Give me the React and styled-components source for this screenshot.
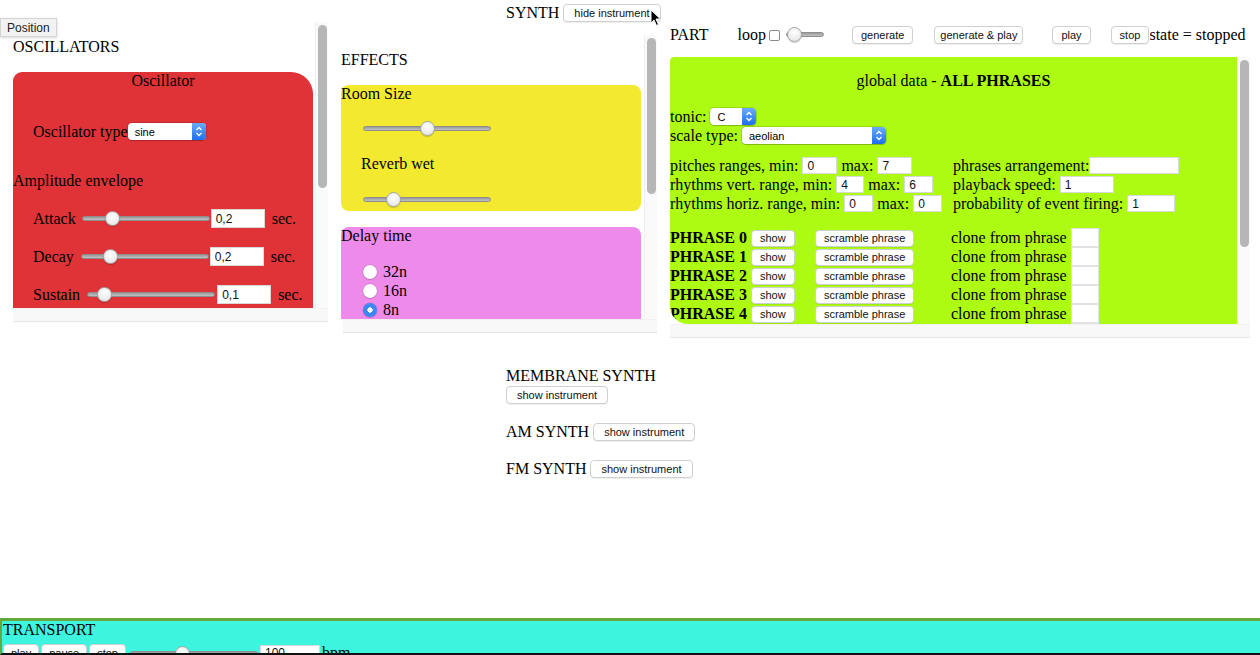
import React from 'react'
import styled, { createGlobalStyle } from 'styled-components'

const GlobalStyle = createGlobalStyle`
  * { box-sizing: border-box; }
  html, body { margin: 0; padding: 0; background: #fff; overflow: hidden; }
  body {
    font-family: "Liberation Serif", "Times New Roman", serif;
    font-size: 16px;
    color: #000;
  }
`

const Page = styled.div`
  position: relative;
  height: 655px;
  padding-top: 3px;
`

const Tooltip = styled.div`
  position: absolute;
  left: 0;
  top: 18px;
  height: 19px;
  padding: 0 6px;
  display: flex;
  align-items: center;
  background: #f2f2f2;
  border: 1px solid #d4d4d4;
  box-shadow: 0 1px 3px rgba(0,0,0,0.15);
  font: 12px "Liberation Sans", Arial, sans-serif;
  color: #222;
  z-index: 5;
`

const Cursor = styled.svg`
  position: absolute;
  left: 650px;
  top: 9px;
  z-index: 5;
`

const InstrumentColumn = styled.div`
  width: 248px;
  margin: 0 auto;
`

const InstrumentHeader = styled.div`
  display: flex;
  flex-wrap: wrap;
  align-items: center;
  gap: 1px 4px;
  margin-top: ${p => p.$mt || 0}px;
  line-height: 19px;
`

const MacButton = styled.button`
  height: ${p => p.$h || 18}px;
  padding: 0 ${p => p.$px ?? 8}px;
  margin: 0;
  margin-left: ${p => p.$ml || 0}px;
  background: #fff;
  border: 1px solid #cfcfcf;
  border-radius: 4px;
  box-shadow: 0 1px 0 rgba(0,0,0,0.06);
  font: 11px "Liberation Sans", Arial, sans-serif;
  color: #111;
  white-space: nowrap;
  cursor: pointer;
`

const PanelsRow = styled.div`
  display: flex;
  align-items: flex-start;
  height: 316px;
`

/* scroll pane with drawn scrollbars (the headless browser hides native ones) */
const ScrollFrame = styled.div`
  flex: none;
  display: flex;
  flex-direction: column;
  width: ${p => p.$w}px;
  height: ${p => p.$h}px;
  margin-top: ${p => p.$mt || 0}px;
  margin-left: ${p => p.$ml || 0}px;
`

const ScrollBody = styled.div`
  flex: 1;
  min-height: 0;
  display: flex;
`

const Viewport = styled.div`
  flex: 1;
  min-width: 0;
  overflow: hidden;
  border-radius: ${p => p.$radius || '0'};
`

const VTrack = styled.div`
  flex: none;
  width: 13px;
  background: #fafafa;
  border-left: 1px solid #efefef;
  padding: 0 1px 0 2px;
`

const Thumb = styled.div`
  height: ${p => p.$h}px;
  margin-top: ${p => p.$mt}px;
  border-radius: 5px;
  background: #b6b6b6;
`

const HTrack = styled.div`
  flex: none;
  height: 14px;
  margin-left: ${p => p.$inset || 0}px;
  background: #f8f8f8;
  border-top: 1px solid #f1f1f1;
  border-bottom: 1px solid #e6e6e6;
`

const ScrollPane = ({ w, h, mt, ml, thumbTop, thumbH, radius, inset, children }) => (
  <ScrollFrame $w={w} $h={h} $mt={mt} $ml={ml}>
    <ScrollBody>
      <Viewport $radius={radius}>{children}</Viewport>
      <VTrack>
        <Thumb $mt={thumbTop} $h={thumbH} />
      </VTrack>
    </ScrollBody>
    <HTrack $inset={inset} />
  </ScrollFrame>
)

const PaneInner = styled.div`
  padding: ${p => p.$pad};
`

const SectionTitle = styled.div`
  line-height: 18px;
  margin-bottom: 16px;
`

/* oscillator */
const OscCard = styled.div`
  background: #df3337;
  border-radius: 9px 22px 0 0;
  padding-bottom: 40px;
`

const CardTitle = styled.div`
  line-height: 18px;
  text-align: center;
`

const TypeRow = styled.div`
  display: flex;
  align-items: center;
  height: 19px;
  margin-top: 32px;
  padding-left: 20px;
`

const SubTitle = styled.div`
  line-height: 18px;
  margin-top: 31px;
`

const EnvRow = styled.div`
  display: flex;
  align-items: center;
  height: 19px;
  margin-top: 19px;
  padding-left: 20px;
`

const Unit = styled.span`
  margin-left: 7px;
`

const Range = styled.input.attrs({ type: 'range', min: 0, max: 1, step: 0.01 })`
  -webkit-appearance: none;
  appearance: none;
  flex: none;
  width: ${p => p.$w || 128}px;
  height: 16px;
  margin: 0 ${p => p.$mr || 0}px 0 ${p => p.$ml || 0}px;
  background: transparent;
  &::-webkit-slider-runnable-track {
    height: 5px;
    border-radius: 3px;
    background: linear-gradient(#9a9a9a, #c2c2c2);
    border: 1px solid #8e8e8e;
  }
  &::-webkit-slider-thumb {
    -webkit-appearance: none;
    width: 15px;
    height: 15px;
    margin-top: -6px;
    border-radius: 50%;
    background: radial-gradient(circle at 50% 35%, #ffffff, #e0e0e0);
    border: 1px solid #a4a4a4;
    box-shadow: 0 1px 1px rgba(0,0,0,0.2);
  }
`

const NumField = styled.input`
  flex: none;
  width: ${p => p.$w}px;
  height: ${p => p.$h || 17}px;
  margin: 0;
  padding: 0 0 0 4px;
  border: 1px solid #d8d8d8;
  background: #fff;
  font: 12px "Liberation Sans", Arial, sans-serif;
  color: #111;
  outline: none;
  vertical-align: middle;
`

const SelectBox = styled.span`
  display: inline-flex;
  align-items: stretch;
  width: ${p => p.$w}px;
  height: 17px;
  background: #fff;
  border-radius: 4px;
  box-shadow: 0 0 0 1px rgba(0,0,0,0.12), 0 1px 1px rgba(0,0,0,0.15);
  overflow: hidden;
  vertical-align: middle;
  font: 11px "Liberation Sans", Arial, sans-serif;
`

const SelectText = styled.span`
  flex: 1;
  display: flex;
  align-items: center;
  padding-left: 7px;
`

const SelectArrows = styled.span`
  width: 14px;
  display: flex;
  align-items: center;
  justify-content: center;
  background: linear-gradient(#6aabfb, #1f6fef);
`

const MacSelect = ({ w, value }) => (
  <SelectBox $w={w}>
    <SelectText>{value}</SelectText>
    <SelectArrows>
      <svg width="8" height="11" viewBox="0 0 8 11">
        <path d="M1.5 4 L4 1.5 L6.5 4 M1.5 7 L4 9.5 L6.5 7" fill="none" stroke="#fff" strokeWidth="1.3" />
      </svg>
    </SelectArrows>
  </SelectBox>
)

/* effects */
const ReverbCard = styled.div`
  background: #f3ea30;
  border-radius: 8px;
  padding-bottom: 3px;
`

const SliderRow = styled.div`
  display: flex;
  align-items: center;
  height: 17px;
  margin-top: ${p => p.$mt || 17}px;
  padding-left: 22px;
`

const FieldLabel = styled.div`
  line-height: 18px;
  margin-top: 18px;
  padding-left: 20px;
`

const DelayCard = styled.div`
  background: #ee8aea;
  border-radius: 8px;
  margin-top: 16px;
  padding-bottom: 24px;
`

const RadioList = styled.div`
  margin-top: 17px;
`

const RadioRow = styled.label`
  display: flex;
  align-items: center;
  height: 19px;
  padding-left: 22px;
  gap: 6px;
`

const Radio = styled.input.attrs({ type: 'radio', name: 'delay' })`
  -webkit-appearance: none;
  appearance: none;
  width: 14px;
  height: 14px;
  margin: 0;
  border-radius: 50%;
  background: #fff;
  box-shadow: 0 0 0 0.5px rgba(0,0,0,0.2), 0 1px 1px rgba(0,0,0,0.12);
  &:checked {
    background: radial-gradient(circle, #fff 0 2.4px, #3b87f4 2.9px);
  }
`

/* part */
const PartColumn = styled.div`
  flex: none;
  width: 580px;
  margin-left: 13px;
`

const PartBar = styled.div`
  display: flex;
  align-items: center;
  height: 19px;
  margin: 3px 0 13px;
  white-space: nowrap;
`

const BarText = styled.span`
  margin-left: ${p => p.$ml || 0}px;
`

const Checkbox = styled.input.attrs({ type: 'checkbox' })`
  -webkit-appearance: none;
  appearance: none;
  flex: none;
  width: 11px;
  height: 11px;
  margin: 2px 0 0 ${p => p.$ml || 0}px;
  border-radius: 2px;
  background: #fff;
  border: 1px solid #8c8c8c;
`

const GreenCard = styled.div`
  background: #adfb13;
  border-radius: 4px 0 0 0;
  padding: 15px 0 16px;
`

const SettingsBlock = styled.div`
  margin-top: 17px;
`

const SettingLine = styled.div`
  display: flex;
  align-items: center;
  height: 19px;
  white-space: pre;
`

const ParamGrid = styled.div`
  display: grid;
  grid-template-columns: 283px auto;
  margin-top: 11px;
`

const ParamLine = styled.div`
  display: flex;
  align-items: center;
  height: 19px;
  white-space: pre;
`

const PhraseList = styled.div`
  margin-top: 15px;
`

const PhraseRow = styled.div`
  display: grid;
  grid-template-columns: 81px 64px 136px auto;
  align-items: center;
  height: 19px;
`

const PhraseName = styled.b`
  white-space: nowrap;
`

const CloneCell = styled.div`
  display: flex;
  align-items: center;
  white-space: pre;
`

const CloneInput = styled(NumField)`
  height: 19px;
  border-color: #e2e2e2;
`

/* transport */
const TransportBar = styled.div`
  position: fixed;
  left: 0;
  right: 0;
  bottom: 0;
  height: 37px;
  overflow: hidden;
  background: #3df5de;
  border-top: 3px solid #66a83c;
  border-left: 2px solid #66a83c;
  border-bottom: 2px solid #111;
  padding-left: 1px;
`

const TransportTitle = styled.div`
  line-height: 18px;
`

const TransportControls = styled.div`
  display: flex;
  align-items: center;
  gap: 2px;
  margin-top: 5px;
  white-space: nowrap;
`

const phrases = [0, 1, 2, 3, 4, 5, 6, 7, 8, 9]

export default function App() {
  return (
    <Page>
      <GlobalStyle />
      <Tooltip>Position</Tooltip>
      <Cursor width="12" height="18" viewBox="0 0 12 18">
        <path d="M1 1 L1 14 L4 11 L6.5 16.5 L8.5 15.5 L6 10 L10.5 10 Z" fill="#000" stroke="#fff" strokeWidth="1" />
      </Cursor>

      <InstrumentColumn>
        <InstrumentHeader>
          <span>SYNTH</span>
          <MacButton $px={10}>hide instrument</MacButton>
        </InstrumentHeader>
      </InstrumentColumn>

      <PanelsRow>
        <ScrollPane w={328} h={300} thumbTop={3} thumbH={163} inset={13}>
          <PaneInner $pad="16px 2px 20px 13px">
            <SectionTitle>OSCILLATORS</SectionTitle>
            <OscCard>
              <CardTitle>Oscillator</CardTitle>
              <TypeRow>
                <span>Oscillator type</span>
                <MacSelect w={78} value="sine" />
              </TypeRow>
              <SubTitle>Amplitude envelope</SubTitle>
              <EnvRow>
                <span>Attack</span>
                <Range $ml={6} $mr={1} defaultValue={0.2} />
                <NumField $w={54} $h={19} defaultValue="0,2" />
                <Unit>sec.</Unit>
              </EnvRow>
              <EnvRow>
                <span>Decay</span>
                <Range $ml={7} $mr={1} defaultValue={0.19} />
                <NumField $w={54} $h={19} defaultValue="0,2" />
                <Unit>sec.</Unit>
              </EnvRow>
              <EnvRow>
                <span>Sustain</span>
                <Range $ml={7} $mr={2} defaultValue={0.08} />
                <NumField $w={54} $h={19} defaultValue="0,1" />
                <Unit>sec.</Unit>
              </EnvRow>
              <EnvRow>
                <span>Release</span>
                <Range $ml={6} $mr={2} defaultValue={0.3} />
                <NumField $w={54} $h={19} defaultValue="0,8" />
                <Unit>sec.</Unit>
              </EnvRow>
              <EnvRow>
                <span>Volume</span>
                <Range $ml={6} $mr={2} defaultValue={0.7} />
                <NumField $w={54} $h={19} defaultValue="-6" />
                <Unit>dB</Unit>
              </EnvRow>
            </OscCard>
          </PaneInner>
        </ScrollPane>

        <ScrollPane w={327} h={298} mt={13} ml={2} thumbTop={3} thumbH={156} inset={13}>
          <PaneInner $pad="16px 3px 16px 11px">
            <SectionTitle>EFFECTS</SectionTitle>
            <ReverbCard>
              <div>Room Size</div>
              <SliderRow $mt={17}>
                <Range defaultValue={0.5} />
              </SliderRow>
              <FieldLabel>Reverb wet</FieldLabel>
              <SliderRow $mt={18}>
                <Range defaultValue={0.2} />
              </SliderRow>
            </ReverbCard>
            <DelayCard>
              <div>Delay time</div>
              <RadioList>
                {['32n', '16n', '8n', '4n', '2n'].map(v => (
                  <RadioRow key={v}>
                    <Radio defaultChecked={v === '8n'} />
                    <span>{v}</span>
                  </RadioRow>
                ))}
              </RadioList>
              <FieldLabel>Feedback</FieldLabel>
              <SliderRow $mt={18}>
                <Range defaultValue={0.3} />
              </SliderRow>
              <FieldLabel>Delay wet</FieldLabel>
              <SliderRow $mt={18}>
                <Range defaultValue={0.4} />
              </SliderRow>
            </DelayCard>
          </PaneInner>
        </ScrollPane>

        <PartColumn>
          <PartBar>
            <span>PART</span>
            <BarText $ml={29}>loop</BarText>
            <Checkbox $ml={3} />
            <Range $w={38} $ml={6} defaultValue={0} />
            <MacButton $ml={28}>generate</MacButton>
            <MacButton $ml={21} $px={5}>generate &amp; play</MacButton>
            <MacButton $ml={29}>play</MacButton>
            <MacButton $ml={20}>stop</MacButton>
            <BarText>state = stopped</BarText>
          </PartBar>

          <ScrollPane w={580} h={281} thumbTop={3} thumbH={187} radius="4px 0 0 18px">
            <GreenCard>
              <CardTitle>global data - <b>ALL PHRASES</b></CardTitle>
              <SettingsBlock>
                <SettingLine>tonic: <MacSelect w={46} value="C" /></SettingLine>
                <SettingLine>scale type: <MacSelect w={144} value="aeolian" /></SettingLine>
              </SettingsBlock>
              <ParamGrid>
                <ParamLine>pitches ranges, min: <NumField $w={35} defaultValue="0" /> max: <NumField $w={35} defaultValue="7" /></ParamLine>
                <ParamLine>phrases arrangement:<NumField $w={90} defaultValue="" /></ParamLine>
                <ParamLine>rhythms vert. range, min: <NumField $w={28} defaultValue="4" /> max: <NumField $w={29} defaultValue="6" /></ParamLine>
                <ParamLine>playback speed: <NumField $w={54} defaultValue="1" /></ParamLine>
                <ParamLine>rhythms horiz. range, min: <NumField $w={29} defaultValue="0" /> max: <NumField $w={29} defaultValue="0" /></ParamLine>
                <ParamLine>probability of event firing: <NumField $w={48} defaultValue="1" /></ParamLine>
              </ParamGrid>
              <PhraseList>
                {phrases.map(n => (
                  <PhraseRow key={n}>
                    <PhraseName>PHRASE {n}</PhraseName>
                    <div><MacButton $h={17}>show</MacButton></div>
                    <div><MacButton $h={17}>scramble phrase</MacButton></div>
                    <CloneCell>clone from phrase <CloneInput $w={28} defaultValue="" /></CloneCell>
                  </PhraseRow>
                ))}
              </PhraseList>
            </GreenCard>
          </ScrollPane>
        </PartColumn>
      </PanelsRow>

      <InstrumentColumn>
        <InstrumentHeader $mt={28}>
          <span>MEMBRANE SYNTH</span>
          <MacButton $px={10}>show instrument</MacButton>
        </InstrumentHeader>
        <InstrumentHeader $mt={18}>
          <span>AM SYNTH</span>
          <MacButton $px={10}>show instrument</MacButton>
        </InstrumentHeader>
        <InstrumentHeader $mt={18}>
          <span>FM SYNTH</span>
          <MacButton $px={10}>show instrument</MacButton>
        </InstrumentHeader>
      </InstrumentColumn>

      <TransportBar>
        <TransportTitle>TRANSPORT</TransportTitle>
        <TransportControls>
          <MacButton $px={7}>play</MacButton>
          <MacButton $px={7}>pause</MacButton>
          <MacButton $px={7}>stop</MacButton>
          <Range $w={128} $ml={2} defaultValue={0.4} />
          <NumField $w={60} defaultValue="100" />
          <span>bpm</span>
        </TransportControls>
      </TransportBar>
    </Page>
  )
}
